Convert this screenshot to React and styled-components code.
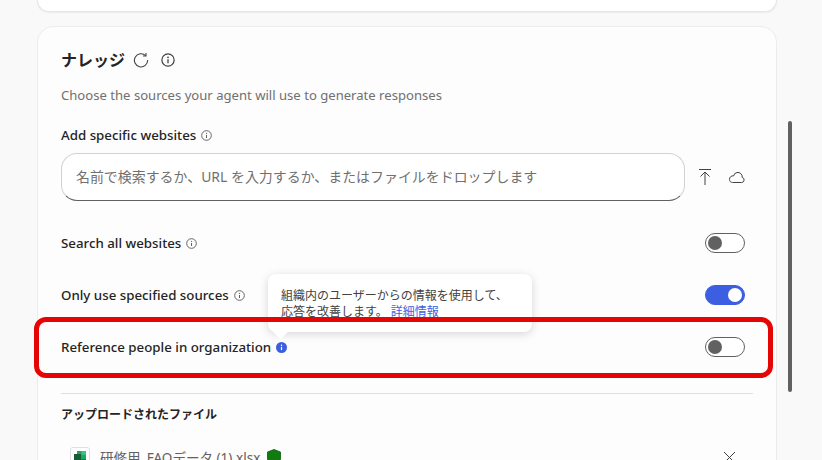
import React from 'react';
import styled, { createGlobalStyle } from 'styled-components';

const GlobalStyle = createGlobalStyle`
  html, body {
    margin: 0;
    height: 100%;
    overflow: hidden;
    background: #f9f9f9;
    font-family: "Noto Sans", "Noto Sans CJK JP", "Open Sans", sans-serif;
    color: #242424;
  }
  * { box-sizing: border-box; }
`;

const Page = styled.div`
  position: relative;
  width: 822px;
  height: 460px;
  overflow: hidden;
  padding: 0 45px 0 37px;
`;

const TopCard = styled.div`
  height: 12px;
  background: #fff;
  border-radius: 0 0 12px 12px;
  border: 1px solid #e6e6e6;
  border-top: 0;
  box-shadow: 0 1px 2px rgba(0, 0, 0, 0.06);
`;

const Card = styled.section`
  margin-top: 14px;
  height: 600px;
  background: #fdfdfd;
  border: 1px solid #ececec;
  border-radius: 16px;
  padding: 21px 24px 0 23px;
`;

const TitleRow = styled.div`
  display: flex;
  align-items: center;
  height: 24px;
  gap: 8px;
`;

const Title = styled.h2`
  margin: 0;
  font-size: 16px;
  font-weight: 700;
  line-height: 24px;
  color: #242424;
`;

const TitleInfo = styled.span`
  display: flex;
  margin-left: 4px;
`;

const Description = styled.p`
  margin: 13px 0 0;
  font-size: 13.1px;
  line-height: 20px;
  color: #707070;
`;

const FieldLabel = styled.div`
  display: flex;
  align-items: center;
  gap: 5px;
  margin-top: 20px;
  height: 20px;
  font-size: 13.3px;
  font-weight: 500;
  color: #242424;
`;

const SearchRow = styled.div`
  display: flex;
  align-items: center;
  margin-top: 8px;
`;

const SearchInput = styled.div`
  width: 624px;
  height: 48px;
  display: flex;
  align-items: center;
  padding: 0 14px 3px;
  background: #fff;
  border: 1px solid #d1d1d1;
  border-bottom-color: #616161;
  border-radius: 16px;
  font-size: 13.95px;
  color: #707070;
`;

const SearchActions = styled.div`
  display: flex;
  align-items: center;
  gap: 16px;
  margin-left: 13px;
`;

const ToggleRow = styled.div`
  position: relative;
  display: flex;
  align-items: center;
  justify-content: space-between;
  height: 52px;
  width: 684px;
  font-size: 13.3px;
  font-weight: 500;
  color: #242424;
`;

const RowList = styled.div`
  margin-top: 16px;
`;

const RowLabel = styled.div`
  display: flex;
  align-items: center;
  gap: 5px;
`;

const HighlightFrame = styled.div`
  position: absolute;
  left: -27px;
  right: -28px;
  top: -4px;
  bottom: -5px;
  border: 5px solid #e60505;
  border-radius: 12px;
  pointer-events: none;
  z-index: 3;
`;

const Switch = styled.div`
  width: 40px;
  height: 20px;
  display: flex;
  align-items: center;
  justify-content: ${p => (p.$on ? 'flex-end' : 'flex-start')};
  padding: 0 2px;
  border-radius: 10px;
  background: ${p => (p.$on ? '#3b5fe0' : '#fff')};
  border: 1px solid ${p => (p.$on ? '#3b5fe0' : '#616161')};
`;

const Knob = styled.span`
  width: 14px;
  height: 14px;
  border-radius: 50%;
  background: ${p => (p.$on ? '#fff' : '#616161')};
`;

const Tooltip = styled.div`
  position: absolute;
  left: 207px;
  top: -47px;
  width: 264px;
  height: 58px;
  padding: 14px 13px 0;
  background: #fff;
  border-radius: 8px;
  box-shadow: 0 2px 10px rgba(0, 0, 0, 0.16);
  font-size: 12px;
  font-weight: 400;
  line-height: 16px;
  color: #424242;
  z-index: 2;

  &::after {
    content: '';
    position: absolute;
    left: 7px;
    bottom: -5px;
    width: 11px;
    height: 11px;
    background: #fff;
    transform: rotate(45deg);
  }
`;

const TooltipLink = styled.span`
  color: #3b5fe0;
  margin-left: 3px;
  text-decoration: underline;
`;

const Divider = styled.hr`
  margin: 20px 0 0;
  border: 0;
  border-top: 1px solid #e0e0e0;
  width: 692px;
`;

const SectionHeading = styled.h3`
  margin: 13px 0 0;
  font-size: 12px;
  font-weight: 600;
  line-height: 16px;
  color: #242424;
`;

const FileRow = styled.div`
  display: flex;
  align-items: center;
  margin-top: 24px;
  padding: 0 9px;
  width: 692px;
  height: 20px;
  font-size: 13.55px;
  color: #616161;
`;

const FileBadge = styled.span`
  width: 20px;
  height: 20px;
  margin-right: 10px;
  display: flex;
  align-items: center;
  justify-content: center;
  background: #fff;
  border: 1px solid #e0e0e0;
  border-radius: 3px;
`;

const FileName = styled.span`
  margin-right: 7px;
`;

const CloseWrap = styled.span`
  margin-left: auto;
  margin-right: 8px;
  display: flex;
`;

const Scrollbar = styled.div`
  position: absolute;
  left: 788px;
  top: 121px;
  width: 4px;
  height: 271px;
  background: #616161;
  border-radius: 2px;
`;

const InfoIcon = ({ size = 11, color = '#616161' }) => (
  <svg width={size} height={size} viewBox="0 0 16 16" fill="none">
    <circle cx="8" cy="8" r="7" stroke={color} strokeWidth="1.4" />
    <circle cx="8" cy="4.9" r="1" fill={color} />
    <path d="M8 7.2v4.4" stroke={color} strokeWidth="1.5" />
  </svg>
);

const FilledInfoIcon = () => (
  <svg width="11" height="11" viewBox="0 0 16 16">
    <circle cx="8" cy="8" r="8" fill="#3b5fe0" />
    <circle cx="8" cy="4.9" r="1.1" fill="#fff" />
    <path d="M8 7.2v4.6" stroke="#fff" strokeWidth="1.7" />
  </svg>
);

const RefreshIcon = () => (
  <svg width="16" height="16" viewBox="0 0 16 16" fill="none" stroke="#424242" strokeWidth="1.1">
    <path d="M12.6 3.6A6.6 6.6 0 1 0 14.6 8" />
    <path d="M13 1v3h-3" />
  </svg>
);

const UploadIcon = () => (
  <svg width="14" height="18" viewBox="0 0 14 18" fill="none" stroke="#424242" strokeWidth="1">
    <path d="M1 1.5h12" />
    <path d="M7 17V4M2.5 8.5 7 4l4.5 4.500" />
  </svg>
);

const CloudIcon = () => (
  <svg width="18" height="14" viewBox="0 0 18 14" fill="none" stroke="#424242" strokeWidth="1">
    <path d="M4.5 12.5h9.2a2.6 2.6 0 0 0 .5-5.1 4.4 4.4 0 0 0-5.2-4.9A4.3 4.3 0 0 0 5.6 5.9 3.4 3.4 0 0 0 1.5 9.4c0 1.8 1.3 3.1 3 3.1z" />
  </svg>
);

const ExcelIcon = () => (
  <svg width="14" height="14" viewBox="0 0 14 14">
    <rect x="4" y="1" width="9" height="12" fill="#21a366" />
    <rect x="8.5" y="1" width="4.5" height="4" fill="#33c481" />
    <rect x="8.5" y="9" width="4.5" height="4" fill="#107c41" />
    <rect x="1" y="4" width="7" height="7" fill="#185c37" />
  </svg>
);

const ShieldIcon = () => (
  <svg width="14" height="16" viewBox="0 0 14 16">
    <path d="M7 0.5 13.5 3v7.5L7 15.5.5 10.500V3z" fill="#107c10" stroke="#0b5a0b" strokeWidth="0.8" />
  </svg>
);

const CloseIcon = () => (
  <svg width="13" height="13" viewBox="0 0 13 13" stroke="#424242" strokeWidth="1" fill="none">
    <path d="M1 1l11 11M12 1 1 12" />
  </svg>
);

const App = () => (
  <>
    <GlobalStyle />
    <Page>
      <TopCard />
      <Card>
        <TitleRow>
          <Title>ナレッジ</Title>
          <RefreshIcon />
          <TitleInfo>
            <InfoIcon size={14} color="#424242" />
          </TitleInfo>
        </TitleRow>
        <Description>Choose the sources your agent will use to generate responses</Description>

        <FieldLabel>
          Add specific websites
          <InfoIcon />
        </FieldLabel>
        <SearchRow>
          <SearchInput>名前で検索するか、URL を入力するか、またはファイルをドロップします</SearchInput>
          <SearchActions>
            <UploadIcon />
            <CloudIcon />
          </SearchActions>
        </SearchRow>

        <RowList>
          <ToggleRow>
            <RowLabel>
              Search all websites
              <InfoIcon />
            </RowLabel>
            <Switch>
              <Knob />
            </Switch>
          </ToggleRow>
          <ToggleRow>
            <RowLabel>
              Only use specified sources
              <InfoIcon />
            </RowLabel>
            <Switch $on>
              <Knob $on />
            </Switch>
          </ToggleRow>
          <ToggleRow>
            <RowLabel>
              Reference people in organization
              <FilledInfoIcon />
            </RowLabel>
            <Switch>
              <Knob />
            </Switch>
            <Tooltip>
              組織内のユーザーからの情報を使用して、
              <br />
              応答を改善します。
              <TooltipLink>詳細情報</TooltipLink>
            </Tooltip>
            <HighlightFrame />
          </ToggleRow>
        </RowList>

        <Divider />
        <SectionHeading>アップロードされたファイル</SectionHeading>
        <FileRow>
          <FileBadge>
            <ExcelIcon />
          </FileBadge>
          <FileName>研修用_FAQデータ (1).xlsx</FileName>
          <ShieldIcon />
          <CloseWrap>
            <CloseIcon />
          </CloseWrap>
        </FileRow>
      </Card>
      <Scrollbar />
    </Page>
  </>
);

export default App;
